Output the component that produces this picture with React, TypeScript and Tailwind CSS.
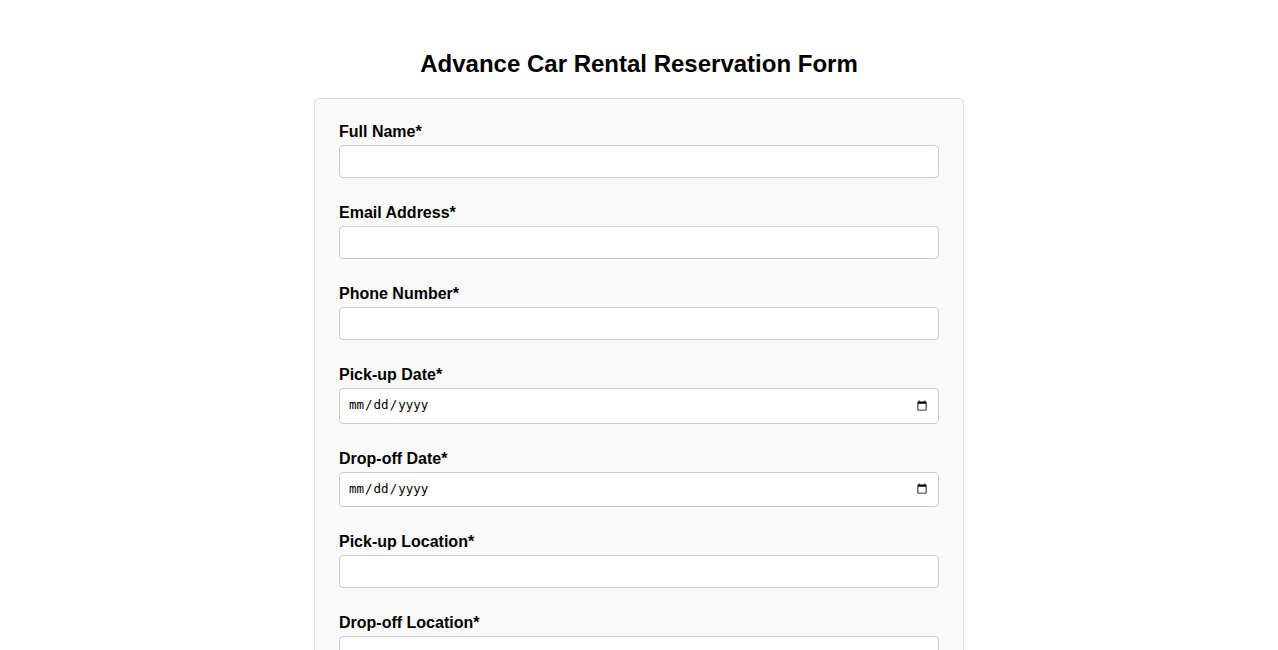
import React from "react";

const fields: { label: string; type: string }[] = [
  { label: "Full Name*", type: "text" },
  { label: "Email Address*", type: "email" },
  { label: "Phone Number*", type: "tel" },
  { label: "Pick-up Date*", type: "date" },
  { label: "Drop-off Date*", type: "date" },
  { label: "Pick-up Location*", type: "text" },
  { label: "Drop-off Location*", type: "text" },
  { label: "Car Type*", type: "text" },
];

export default function App() {
  return (
    <div className="min-h-screen bg-white px-5 pt-[50px] pb-10 text-black [font-family:'Liberation_Sans',Arial,sans-serif]">
      <h1 className="mb-[20px] text-center text-[24px] leading-[28px] font-bold">
        Advance Car Rental Reservation Form
      </h1>
      <form className="mx-auto w-[650px] rounded-[5px] border border-[#ddd] bg-[#f9f9f9] p-6">
        {fields.map((f) => (
          <div key={f.label} className="mb-[26px]">
            <label className="mb-1 block text-[16px] leading-[18px] font-bold">{f.label}</label>
            {f.type === "date" ? (
              <input
                type="date"
                className="block h-[35.5px] w-full rounded-[4px] border border-[#ccc] bg-white px-2 py-1 text-[12.5px] [font-family:'DejaVu_Sans_Mono',monospace]"
              />
            ) : (
              <input
                type={f.type}
                className="block h-[33px] w-full rounded-[4px] border border-[#ccc] bg-white px-2 py-2 text-[13.33px]"
              />
            )}
          </div>
        ))}
      </form>
    </div>
  );
}
